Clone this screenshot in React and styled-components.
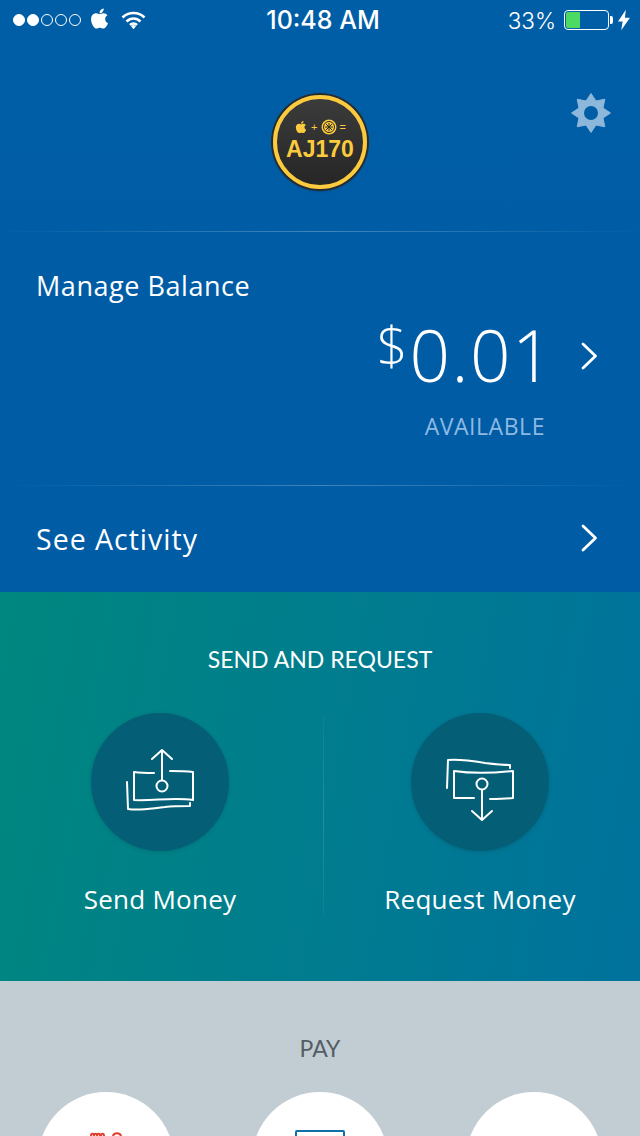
import React from 'react';
import styled, { createGlobalStyle } from 'styled-components';
import { FaApple } from 'react-icons/fa';

const GlobalStyle = createGlobalStyle`
  html, body {
    margin: 0;
    padding: 0;
    height: 1136px;
    overflow: hidden;
    background: #c2cdd3;
  }
  * { box-sizing: border-box; }
`;

const Page = styled.div`
  width: 640px;
  height: 1136px;
  overflow: hidden;
  font-family: "Open Sans", Lato, sans-serif;
  color: #fff;
`;

const BlueSection = styled.section`
  height: 592px;
  background: linear-gradient(180deg, #005ea6 0%, #005ca4 100%);
  display: flex;
  flex-direction: column;
`;

const StatusBar = styled.div`
  height: 40px;
  display: grid;
  grid-template-columns: 1fr auto 1fr;
  align-items: center;
  padding: 0 10px 0 13px;
  font-family: Inter, "Liberation Sans", sans-serif;
  font-size: 22.5px;
`;

const StatusLeft = styled.div`
  display: flex;
  align-items: center;
`;

const StatusRight = styled.div`
  display: flex;
  align-items: center;
  justify-content: flex-end;
  font-weight: 300;
`;

const Dots = styled.div`
  display: flex;
  gap: 2px;
`;

const Dot = styled.span`
  width: 12px;
  height: 12px;
  border-radius: 50%;
  border: 1px solid #fff;
  background: ${(p) => (p.$on ? '#fff' : 'transparent')};
`;

const AppleMark = styled(FaApple)`
  margin: -4px 0 0 8px;
  width: 21px;
  height: 23px;
  color: #fff;
`;

const WifiIcon = styled.svg`
  width: 25px;
  height: 20px;
  margin-left: 11px;
`;

const Clock = styled.div`
  font-weight: 500;
  font-size: 25px;
  margin-left: 3px;
`;

const Battery = styled.div`
  width: 45px;
  height: 20px;
  margin-left: 8px;
  border: 1px solid #fff;
  border-radius: 4px;
  padding: 1px;
  display: flex;
`;

const BatteryFill = styled.div`
  width: 33%;
  background: #4cd964;
  border-radius: 2px 0 0 2px;
`;

const BatteryTip = styled.div`
  width: 3px;
  height: 8px;
  margin-left: 1px;
  background: #fff;
  border-radius: 0 2px 2px 0;
`;

const BoltIcon = styled.svg`
  width: 12px;
  height: 22px;
  margin-left: 5px;
`;

const Header = styled.div`
  height: 191px;
  display: grid;
  grid-template-columns: 1fr auto 1fr;
  padding-top: 55px;
  align-items: start;
`;

const Badge = styled.div`
  grid-column: 2;
  width: 94px;
  height: 94px;
  border-radius: 50%;
  background: linear-gradient(180deg, #3b3b3c, #262626);
  border: 4px solid #fbcb3d;
  box-shadow: 0 0 0 2px #2a2a2b, 0 2px 3px rgba(0, 0, 0, .3);
  display: flex;
  flex-direction: column;
  align-items: center;
  padding-top: 20px;
  color: #fbcb3d;
  font-family: "Liberation Sans", Arial, sans-serif;
`;

const BadgeIcons = styled.div`
  display: flex;
  align-items: center;
  gap: 3px;
  height: 16px;
  font-size: 11px;
`;

const BadgeApple = styled(FaApple)`
  width: 14px;
  height: 14px;
`;

const BadgeName = styled.div`
  font-size: 23px;
  font-weight: 700;
  line-height: 26px;
  margin-top: 1px;
`;

const GearIcon = styled.svg`
  grid-column: 3;
  justify-self: end;
  margin: -3px 28px 0 0;
  width: 42px;
  height: 42px;
`;

const Divider = styled.div`
  height: 1px;
  background: linear-gradient(90deg, rgba(255,255,255,0), rgba(255,255,255,.25) 50%, rgba(255,255,255,0));
`;

const BalanceBlock = styled.div`
  height: 253px;
  padding: 36px 42px 0 36px;
  display: flex;
  flex-direction: column;
`;

const RowTitle = styled.div`
  font-size: ${(p) => p.$size || '27px'};
  line-height: 36px;
  letter-spacing: ${(p) => p.$tracking || '.55px'};
`;

const AmountRow = styled.div`
  display: flex;
  justify-content: flex-end;
  align-items: center;
  margin-top: 9px;
  height: 84px;
`;

const Amount = styled.div`
  font-weight: 300;
  font-size: 71px;
  line-height: 84px;
  letter-spacing: 1.5px;
  display: flex;
  margin-right: 26px;
`;

const Currency = styled.span`
  font-size: 54px;
  line-height: 62px;
  letter-spacing: 0;
  margin-right: 2px;
`;

const Chevron = styled.svg`
  width: 18px;
  height: 28px;
  margin-top: ${(p) => p.$nudge || 0};
`;

const Available = styled.div`
  text-align: right;
  margin: 14px 53px 0 0;
  font-size: 23px;
  line-height: 30px;
  letter-spacing: .55px;
  color: #8fb9e2;
`;

const ActivityRow = styled.div`
  flex: 1;
  display: flex;
  align-items: center;
  justify-content: space-between;
  padding: 0 42px 0 36px;
`;

const TealSection = styled.section`
  height: 389px;
  background: linear-gradient(100deg, #00877f 0%, #00729d 100%);
  padding-top: 53px;
`;

const SectionLabel = styled.div`
  text-align: center;
  font-family: Lato, sans-serif;
  font-size: 23px;
  line-height: 28px;
  color: ${(p) => p.$color || '#fff'};
`;

const ActionRow = styled.div`
  display: grid;
  grid-template-columns: 1fr 1fr;
  margin-top: 40px;
  position: relative;
`;

const ActionSplit = styled.div`
  position: absolute;
  left: 323px;
  top: 2px;
  bottom: 0;
  width: 1px;
  background: linear-gradient(180deg, rgba(255,255,255,.04), rgba(255,255,255,.14) 50%, rgba(255,255,255,.04));
`;

const Action = styled.div`
  display: flex;
  flex-direction: column;
  align-items: center;
`;

const ActionCircle = styled.div`
  width: 138px;
  height: 138px;
  border-radius: 50%;
  background: #045f76;
  box-shadow: 0 1px 4px rgba(0, 0, 0, .12);
  display: flex;
  align-items: center;
  justify-content: center;
`;

const ActionIcon = styled.svg`
  width: 160px;
  height: 160px;
  flex: none;
`;

const ActionLabel = styled.div`
  margin-top: 30px;
  font-size: 26px;
  line-height: 36px;
  letter-spacing: .25px;
`;

const GraySection = styled.section`
  height: 155px;
  background: #c2cdd3;
  padding-top: 53px;
`;

const PayRow = styled.div`
  display: flex;
  justify-content: space-between;
  padding: 0 38px;
  margin-top: 30px;
`;

const PayCircle = styled.div`
  width: 136px;
  height: 136px;
  flex: none;
  border-radius: 50%;
  background: #fff;
  display: flex;
  justify-content: center;
  padding-top: 38px;
`;

const PayCard = styled.div`
  width: 50px;
  height: 34px;
  border: 2px solid #0f6fa8;
  border-radius: 2px;
`;

const PayScribble = styled.svg`
  width: 34px;
  height: 20px;
  margin-top: 2px;
`;

const ChevronMark = ({ nudge }) => (
  <Chevron $nudge={nudge} viewBox="0 0 18 28" fill="none" stroke="#fff" strokeWidth="2.8" strokeLinecap="round" strokeLinejoin="round">
    <path d="M3 2l12.5 12L3 26" />
  </Chevron>
);

// eight tooth gear, points worked out from the tooth count
const gearPath = () => {
  const points = [];
  for (let i = 0; i < 16; i += 1) {
    const r = i % 2 === 0 ? 19.5 : 13;
    const a = (i * Math.PI) / 8 - Math.PI / 2;
    points.push(`${(21 + r * Math.cos(a)).toFixed(2)} ${(21 + r * Math.sin(a)).toFixed(2)}`);
  }
  return `M${points.join('L')}Z`;
};

const App = () => (
  <Page>
    <GlobalStyle />
    <BlueSection>
      <StatusBar>
        <StatusLeft>
          <Dots>
            {[1, 1, 0, 0, 0].map((on, i) => <Dot key={i} $on={on === 1} />)}
          </Dots>
          <AppleMark />
          <WifiIcon viewBox="0 0 25 20" fill="none" stroke="#fff" strokeWidth="2.6">
            <path d="M1.5 7.5c6-6 16-6 22 0" />
            <path d="M5.5 11.5c4-4 10-4 14 0" />
            <path d="M9 15c2-2 5-2 7 0" />
            <path d="M10 16.2l2.5-1.8 2.5 1.8-2.5 3z" fill="#fff" stroke="none" />
          </WifiIcon>
        </StatusLeft>
        <Clock>10:48 AM</Clock>
        <StatusRight>
          33%
          <Battery><BatteryFill /></Battery>
          <BatteryTip />
          <BoltIcon viewBox="0 0 13 22" fill="#fff">
            <path d="M8.5 0L0 12.5h5L3.5 22 13 8.5H7.5z" />
          </BoltIcon>
        </StatusRight>
      </StatusBar>
      <Header>
        <Badge>
          <BadgeIcons>
            <BadgeApple />
            +
            <svg width="16" height="16" viewBox="0 0 16 16">
              <circle cx="8" cy="8" r="7.5" fill="#fbcb3d" />
              <circle cx="8" cy="8" r="5.5" fill="none" stroke="#2a2a2b" strokeWidth="1" />
              <path d="M5 5l6 6M11 5l-6 6M8 4v8M4 8h8" stroke="#2a2a2b" strokeWidth="1" />
            </svg>
            =
          </BadgeIcons>
          <BadgeName>AJ170</BadgeName>
        </Badge>
        <GearIcon viewBox="0 0 42 42">
          <path d={gearPath()} fill="#8db7db" stroke="#8db7db" strokeWidth="1" strokeLinejoin="round" />
          <circle cx="21" cy="21" r="7" fill="#005ea6" />
        </GearIcon>
      </Header>
      <Divider />
      <BalanceBlock>
        <RowTitle>Manage Balance</RowTitle>
        <AmountRow>
          <Amount>
            <Currency>$</Currency>
            0.01
          </Amount>
          <ChevronMark nudge="2px" />
        </AmountRow>
        <Available>AVAILABLE</Available>
      </BalanceBlock>
      <Divider />
      <ActivityRow>
        <RowTitle $size="28.5px" $tracking="1px">See Activity</RowTitle>
        <ChevronMark nudge="-3px" />
      </ActivityRow>
    </BlueSection>
    <TealSection>
      <SectionLabel>SEND AND REQUEST</SectionLabel>
      <ActionRow>
        <ActionSplit />
        <Action>
          <ActionCircle>
            <ActionIcon viewBox="0 0 160 160" fill="none" stroke="#fff" strokeWidth="2" strokeLinecap="round" strokeLinejoin="round">
              <path d="M82 78V49M72 57l10-9 10 9" />
              <circle cx="82" cy="84" r="5.5" />
              <path d="M74 71c-7 0-13 0-20-1v28c20 1 40-3 59 0V70c-8-1-15-1-23-1" />
              <path d="M47 80l1 27c13 2 25-1 37-2 8-1 17-1 25-1v-3" />
            </ActionIcon>
          </ActionCircle>
          <ActionLabel>Send Money</ActionLabel>
        </Action>
        <Action>
          <ActionCircle>
            <ActionIcon viewBox="0 0 160 160" fill="none" stroke="#fff" strokeWidth="2" strokeLinecap="round" strokeLinejoin="round">
              <path d="M82 88v29M72 109l10 9 10-9" />
              <circle cx="82" cy="82" r="5.5" />
              <path d="M74 96H54V69c20 3 40 2 59 0v27c-8 1-15 1-23 1" />
              <path d="M47 86l1-28c13-1 25 1 37 3 8 1 17 2 25 2v3" />
            </ActionIcon>
          </ActionCircle>
          <ActionLabel>Request Money</ActionLabel>
        </Action>
      </ActionRow>
    </TealSection>
    <GraySection>
      <SectionLabel $color="#545d66">PAY</SectionLabel>
      <PayRow>
        <PayCircle>
          <PayScribble viewBox="0 0 34 20" fill="none" stroke="#e2402f" strokeWidth="2">
            <path d="M2 12V4c0-3 3-3 3 0v8M5 4c0-3 3-3 3 0v8M8 4c0-3 3-3 3 0v8M12 4c0-3 3-3 3 0v8M24 12V5c0-5 8-5 8 0v7" />
          </PayScribble>
        </PayCircle>
        <PayCircle><PayCard /></PayCircle>
        <PayCircle />
      </PayRow>
    </GraySection>
  </Page>
);

export default App;
